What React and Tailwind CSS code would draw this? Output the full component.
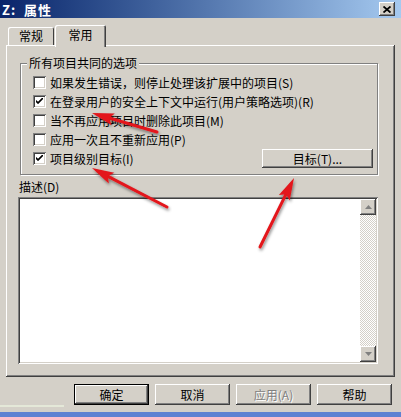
import React from 'react'

const raised = "shadow-[inset_-1px_-1px_#404040,inset_1px_1px_#ffffff,inset_-2px_-2px_#808080]"
const sunken = "shadow-[inset_1px_1px_#808080,inset_-1px_-1px_#ffffff,inset_2px_2px_#404040,inset_-2px_-2px_#d4d0c8]"

function Check({ on }) {
  return (
    <span className={"w-[13px] h-[13px] bg-white shrink-0 flex items-center justify-center " + sunken}>
      {on && (
        <svg width="7" height="7" viewBox="0 0 7 7">
          <path d="M0 2 L0 4 L2 6 L7 1 L7 -1 L2 4 Z" fill="#000" />
          <path d="M0 3 L2 5 L7 0" stroke="#000" strokeWidth="1.2" fill="none" />
        </svg>
      )}
    </span>
  )
}

function Row({ on, children }) {
  return (
    <div className="h-[19px] flex items-center gap-[4px]">
      <Check on={on} />
      <span className="whitespace-nowrap leading-none">{children}</span>
    </div>
  )
}

function Arrow({ x1, y1, x2, y2 }) {
  const dx = x2 - x1
  const dy = y2 - y1
  const len = Math.sqrt(dx * dx + dy * dy)
  const ux = dx / len
  const uy = dy / len
  const bx = x2 - ux * 22
  const by = y2 - uy * 22
  const px = -uy * 6
  const py = ux * 6
  const pts = `${x2},${y2} ${bx + px},${by + py} ${bx + ux * 4},${by + uy * 4} ${bx - px},${by - py}`
  return (
    <g filter="url(#sh)">
      <line x1={x1} y1={y1} x2={bx + ux * 4} y2={by + uy * 4} stroke="#e3141a" strokeWidth="3" strokeLinecap="round" />
      <polygon points={pts} fill="#e3141a" />
    </g>
  )
}

function Btn({ children, main, off, className = "" }) {
  const sh = main
    ? "shadow-[inset_-1px_-1px_#000000,inset_1px_1px_#000000,inset_-2px_-2px_#404040,inset_2px_2px_#ffffff,inset_-3px_-3px_#808080]"
    : raised
  return (
    <div className={"h-[21px] w-[75px] flex items-center justify-center bg-[#d4d0c8] " + sh + " " + className}>
      <span className={off ? "text-[#808080] [text-shadow:1px_1px_0_#ffffff]" : ""}>{children}</span>
    </div>
  )
}

export default function App() {
  return (
    <div className="relative w-[401px] h-[417px] bg-[#d4d0c8] overflow-hidden flex flex-col font-['Noto_Sans_CJK_SC',sans-serif] text-[12px] text-black">
      {/* title bar */}
      <div className="h-[18px] shrink-0 flex items-center justify-between pl-[2px] pr-[6px] bg-gradient-to-r from-[#0a246a] to-[#a6caf0]">
        <span className="text-white font-bold text-[13px] leading-none tracking-[1px]">Z:&nbsp;&nbsp;属性</span>
        <div className={"w-[16px] h-[14px] bg-[#d4d0c8] flex items-center justify-center " + raised}>
          <svg width="8" height="7" viewBox="0 0 8 7">
            <path d="M0.5 0.5 L7.5 6.5 M7.5 0.5 L0.5 6.5" stroke="#000" strokeWidth="1.8" />
          </svg>
        </div>
      </div>

      {/* tabs */}
      <div className="mt-[7px] h-[20px] flex items-end pl-[8px] relative z-10">
        <div className="h-[18px] w-[46px] flex items-center justify-center rounded-t-[2px] shadow-[inset_1px_1px_#ffffff,inset_-1px_0_#404040]">
          <span className="leading-none">常规</span>
        </div>
        <div className="h-[22px] w-[51px] -mb-[2px] ml-[1px] flex items-start pt-[4px] justify-center rounded-t-[2px] bg-[#d4d0c8] shadow-[inset_1px_1px_#ffffff,inset_-1px_0_#404040,inset_-2px_0_#808080]">
          <span className="leading-none">常用</span>
        </div>
      </div>

      {/* panel */}
      <div className={"mx-[6px] h-[332px] shrink-0 flex flex-col " + raised}>
        <div className="relative mt-[18px] ml-[14px] w-[358px] h-[112px] border border-[#808080] shadow-[inset_1px_1px_#ffffff,1px_1px_#ffffff] pt-[9px] pl-[12px] pr-[4px]">
          <span className="absolute -top-[8px] left-[6px] px-[2px] bg-[#d4d0c8] leading-[14px]">所有项目共同的选项</span>
          <Row>如果发生错误，则停止处理该扩展中的项目(S)</Row>
          <Row on>在登录用户的安全上下文中运行(用户策略选项)(R)</Row>
          <Row>当不再应用项目时删除此项目(M)</Row>
          <Row>应用一次且不重新应用(P)</Row>
          <div className="flex items-center justify-between">
            <Row on>项目级别目标(I)</Row>
            <Btn className="!w-[111px] !h-[19px]">目标(T)...</Btn>
          </div>
        </div>

        <div className="mt-[5px] ml-[13px] h-[14px] leading-[14px]">描述(D)</div>

        <div className={"mt-[3px] ml-[12px] w-[360px] h-[167px] bg-white p-[2px] flex justify-end " + sunken}>
          <div className="w-[16px] h-full flex flex-col bg-[image:repeating-conic-gradient(#d4d0c8_0_25%,#ffffff_0_50%)] bg-[length:2px_2px]">
            <div className={"h-[16px] bg-[#d4d0c8] flex items-center justify-center " + raised}>
              <svg width="7" height="4" viewBox="0 0 7 4"><polygon points="3.5,0 7,4 0,4" fill="#808080" /></svg>
            </div>
            <div className="flex-1" />
            <div className={"h-[16px] bg-[#d4d0c8] flex items-center justify-center " + raised}>
              <svg width="7" height="4" viewBox="0 0 7 4"><polygon points="0,0 7,0 3.5,4" fill="#808080" /></svg>
            </div>
          </div>
        </div>
      </div>

      {/* buttons */}
      <div className="mt-[7px] flex justify-end gap-[6px] pr-[9px]">
        <Btn main>确定</Btn>
        <Btn>取消</Btn>
        <Btn off>应用(A)</Btn>
        <Btn>帮助</Btn>
      </div>

      <div className="mt-auto h-[2px] w-[64px] bg-[#e4e8d8]" />
      <div className="mt-[5px] h-[5px] bg-[#5f82d2]" />

      {/* red annotation arrows */}
      <svg className="absolute inset-0 pointer-events-none" width="401" height="417">
        <defs>
          <filter id="sh" x="-20%" y="-20%" width="140%" height="140%">
            <feDropShadow dx="1" dy="2" stdDeviation="1.5" floodColor="#000" floodOpacity="0.45" />
          </filter>
        </defs>
        <Arrow x1={157} y1={132} x2={92} y2={113} />
        <Arrow x1={167} y1={207} x2={92} y2={168} />
        <Arrow x1={260} y1={247} x2={294} y2={178} />
      </svg>
    </div>
  )
}
